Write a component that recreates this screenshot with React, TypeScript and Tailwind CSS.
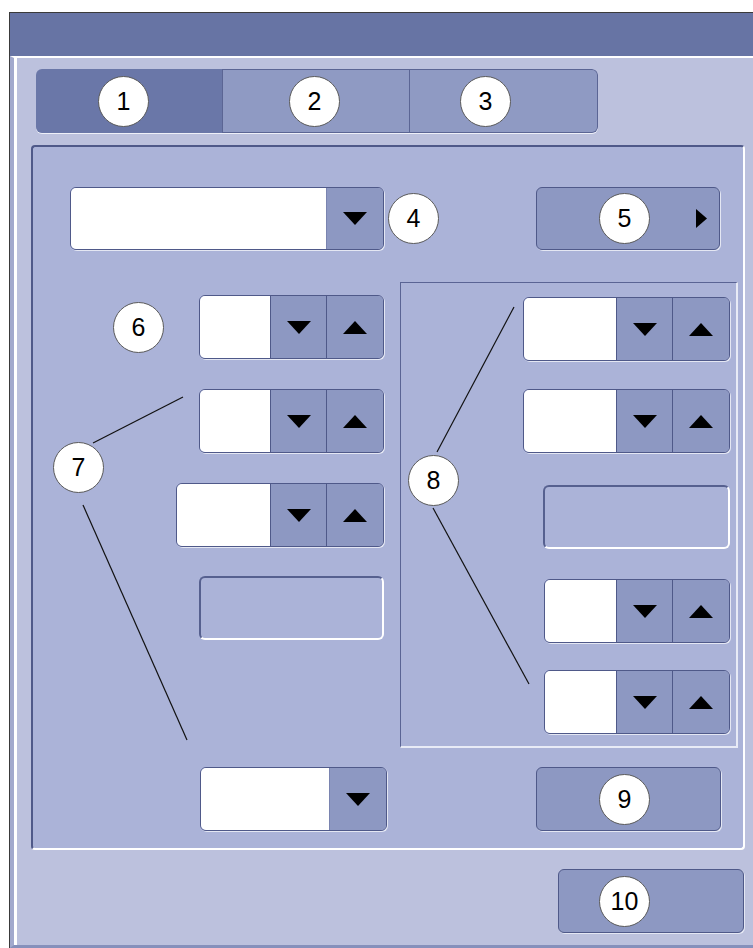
import React from 'react';

const font = { fontFamily: '"Liberation Sans", Arial, sans-serif' };

function Callout({ n, className = '' }: { n: string; className?: string }) {
  return (
    <div
      className={`w-[51px] h-[51px] shrink-0 rounded-full bg-white border border-[#5a5a5a] flex items-center justify-center text-[25px] leading-none text-black ${className}`}
      style={font}
    >
      {n}
    </div>
  );
}

function Down() {
  return (
    <svg width="24" height="13" viewBox="0 0 24 13">
      <path d="M0 0 H24 L12 13 Z" fill="#000" />
    </svg>
  );
}

function Up() {
  return (
    <svg width="24" height="13" viewBox="0 0 24 13">
      <path d="M12 0 L24 13 H0 Z" fill="#000" />
    </svg>
  );
}

function Spinner({ w }: { w: string }) {
  return (
    <div className={`${w} h-[64px] flex rounded-md border border-[#4f5989] overflow-hidden shadow-[1px_1px_0_#e4e7f3]`}>
      <div className="flex-1 bg-white" />
      <div className="w-[56px] bg-[#8d98c2] border-l border-[#4f5989] flex items-center justify-center">
        <Down />
      </div>
      <div className="w-[57px] bg-[#8d98c2] border-l border-[#4f5989] flex items-center justify-center">
        <Up />
      </div>
    </div>
  );
}

function Dropdown({ w, h = 'h-[64px]' }: { w: string; h?: string }) {
  return (
    <div className={`${w} ${h} flex rounded-md border border-[#4f5989] overflow-hidden shadow-[1px_1px_0_#e4e7f3]`}>
      <div className="flex-1 bg-white" />
      <div className="w-[57px] bg-[#8d98c2] border-l border-[#7a84b0] flex items-center justify-center">
        <Down />
      </div>
    </div>
  );
}

function EmptyBox({ w }: { w: string }) {
  return (
    <div className={`${w} h-[64px] rounded-md border-t-2 border-l-2 border-[#56608f] border-r-2 border-b-2 border-r-white border-b-white bg-[#abb3d8]`} />
  );
}

export default function App() {
  return (
    <div className="relative w-[753px] h-[948px] bg-white overflow-hidden" style={font}>
      <div className="pt-3 pl-[9px]">
        <div className="h-[936px] border-t border-l border-[#3a3a3a] flex flex-col">
          {/* title bar */}
          <div className="h-[43px] bg-[#6774a4]" />

          {/* body */}
          <div className="flex-1 border-t-2 border-white border-l-4 border-l-[#a2a9cd] border-b-[3px] border-b-[#8690bb]">
            <div className="h-full border-l-[3px] border-white bg-[#bcc1dd] pt-[11px]">
              {/* tabs */}
              <div className="ml-[19px] w-[562px] h-[64px] flex rounded-md overflow-hidden shadow-[0_1px_0_#eef0f8]">
                <div className="w-[186px] bg-[#6a77a8] flex items-center pl-[62px]">
                  <Callout n="1" />
                </div>
                <div className="w-[188px] bg-[#8f9ac3] border border-[#5b6594] flex items-center pl-[66px]">
                  <Callout n="2" />
                </div>
                <div className="w-[188px] bg-[#8f9ac3] border border-l-0 border-[#5b6594] rounded-r-md flex items-center pl-[50px]">
                  <Callout n="3" />
                </div>
              </div>

              {/* main panel */}
              <div className="mt-[12px] ml-[14px] w-[714px] h-[705px] rounded-sm bg-[#abb3d8] border-t-2 border-l-2 border-[#4f5989] border-r-2 border-b-2 border-r-white border-b-white">
                <div className="mt-[40px] flex items-center">
                  <Dropdown w="w-[314px] ml-[37px]" h="h-[63px]" />
                  <Callout n="4" className="ml-[4px]" />
                  <div className="ml-[97px] w-[184px] h-[63px] rounded-md border border-[#4f5989] bg-[#8d98c2] flex items-center pl-[62px] pr-[12px] shadow-[1px_1px_0_#e4e7f3]">
                    <Callout n="5" />
                    <svg className="ml-auto" width="11" height="19" viewBox="0 0 11 19">
                      <path d="M0 0 L11 9.5 L0 19 Z" fill="#000" />
                    </svg>
                  </div>
                </div>

                <div className="mt-[32px] flex items-start">
                  {/* left column */}
                  <div className="w-[367px] flex flex-col items-end pr-[16px]">
                    <div className="mt-[13px] flex items-center gap-[35px]">
                      <Callout n="6" />
                      <Spinner w="w-[185px]" />
                    </div>
                    <div className="mt-[30px]">
                      <Spinner w="w-[185px]" />
                    </div>
                    <div className="mt-[30px]">
                      <Spinner w="w-[208px]" />
                    </div>
                    <div className="mt-[29px]">
                      <EmptyBox w="w-[185px]" />
                    </div>
                  </div>

                  {/* right group */}
                  <div className="w-[338px] h-[466px] border-t border-l border-[#5a6494] border-r-2 border-b-2 border-r-[#e8ebf6] border-b-[#e8ebf6] flex flex-col items-end pr-[6px]">
                    <div className="mt-[14px]">
                      <Spinner w="w-[207px]" />
                    </div>
                    <div className="mt-[28px]">
                      <Spinner w="w-[207px]" />
                    </div>
                    <div className="mt-[32px]">
                      <EmptyBox w="w-[187px]" />
                    </div>
                    <div className="mt-[30px]">
                      <Spinner w="w-[186px]" />
                    </div>
                    <div className="mt-[27px]">
                      <Spinner w="w-[186px]" />
                    </div>
                  </div>
                </div>

                <div className="mt-[19px] flex">
                  <Dropdown w="w-[187px] ml-[167px]" />
                  <div className="ml-[149px] w-[185px] h-[64px] rounded-md border border-[#4f5989] bg-[#8d98c2] flex items-center pl-[62px] shadow-[1px_1px_0_#e4e7f3]">
                    <Callout n="9" />
                  </div>
                </div>
              </div>

              <div className="mt-[19px] ml-[541px] w-[186px] h-[64px] rounded-md border border-[#4f5989] bg-[#8d98c2] flex items-center pl-[40px] shadow-[1px_1px_0_#e4e7f3]">
                <Callout n="10" />
              </div>
            </div>
          </div>
        </div>
      </div>

      {/* callout lines */}
      <svg className="absolute inset-0 pointer-events-none" width="753" height="948">
        <line x1="93" y1="443" x2="183" y2="397" stroke="#111" strokeWidth="1.2" />
        <line x1="83" y1="505" x2="187" y2="740" stroke="#111" strokeWidth="1.2" />
        <line x1="437" y1="452" x2="514" y2="307" stroke="#111" strokeWidth="1.2" />
        <line x1="433" y1="508" x2="529" y2="684" stroke="#111" strokeWidth="1.2" />
      </svg>
      <Callout n="7" className="absolute left-[53px] top-[442px]" />
      <Callout n="8" className="absolute left-[408px] top-[455px]" />
    </div>
  );
}
